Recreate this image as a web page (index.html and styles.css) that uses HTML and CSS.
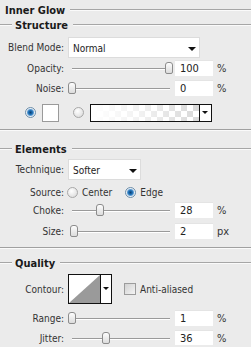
FILE: index.html
```html
<!DOCTYPE html>
<html lang="en">
<head>
  <meta charset="UTF-8">
  <title>Inner Glow</title>
  <link rel="stylesheet" href="styles.css">
</head>
<body>
  <div class="panel">
    <div class="title"><span>Inner Glow</span><i class="rule"></i></div>

    <div class="head m1"><i class="lead"></i><span>Structure</span><i class="rule"></i></div>

    <div class="row tall m5">
      <label>Blend Mode:</label>
      <div class="select wide">Normal<b class="arrow"></b></div>
    </div>

    <div class="row m3">
      <label>Opacity:</label>
      <div class="slider"><i class="track"></i><i class="thumb" style="left: 97px"></i></div>
      <div class="num">100</div><span class="unit">%</span>
    </div>

    <div class="row m6">
      <label>Noise:</label>
      <div class="slider"><i class="track"></i><i class="thumb" style="left: 0px"></i></div>
      <div class="num">0</div><span class="unit">%</span>
    </div>

    <div class="colors m9">
      <i class="radio on"></i>
      <i class="swatch"></i>
      <i class="radio"></i>
      <div class="gradient"><i class="checks"></i><b class="drop"><b class="arrow"></b></b></div>
    </div>

    <hr class="sep m8">

    <div class="head m11"><i class="lead"></i><span>Elements</span><i class="rule"></i></div>

    <div class="row tall m3">
      <label>Technique:</label>
      <div class="select short">Softer<b class="arrow"></b></div>
    </div>

    <div class="row m5">
      <label>Source:</label>
      <i class="radio src"></i><span class="opt">Center</span>
      <i class="radio on src2"></i><span class="opt">Edge</span>
    </div>

    <div class="row m4">
      <label>Choke:</label>
      <div class="slider"><i class="track"></i><i class="thumb" style="left: 28px"></i></div>
      <div class="num">28</div><span class="unit">%</span>
    </div>

    <div class="row m7">
      <label>Size:</label>
      <div class="slider"><i class="track"></i><i class="thumb" style="left: 2px"></i></div>
      <div class="num">2</div><span class="unit">px</span>
    </div>

    <hr class="sep m9">

    <div class="head m7"><i class="lead"></i><span>Quality</span><i class="rule"></i></div>

    <div class="row contour-row m4">
      <label>Contour:</label>
      <div class="contour">
        <svg width="31" height="28" viewBox="0 0 31 28"><rect width="31" height="28" fill="#fff"/><polygon points="0,28 31,0 31,28" fill="#9a9a9a"/></svg>
        <b class="drop"><b class="arrow"></b></b>
      </div>
      <i class="check"></i><span class="opt">Anti-aliased</span>
    </div>

    <div class="row m7">
      <label>Range:</label>
      <div class="slider"><i class="track"></i><i class="thumb" style="left: 0px"></i></div>
      <div class="num">1</div><span class="unit">%</span>
    </div>

    <div class="row m6">
      <label>Jitter:</label>
      <div class="slider"><i class="track"></i><i class="thumb" style="left: 34px"></i></div>
      <div class="num">36</div><span class="unit">%</span>
    </div>
  </div>
</body>
</html>
```

FILE: styles.css
```css
html, body {
  margin: 0;
  background-color: #ebebeb;
}
body {
  font-family: "DejaVu Sans Condensed", "DejaVu Sans", sans-serif;
  font-size: 10px;
  color: #222;
}
.panel {
  width: 251px;
  padding-top: 3px;
}
.m1 { margin-top: 1px; }
.m3 { margin-top: 3px; }
.m4 { margin-top: 4px; }
.m5 { margin-top: 5px; }
.m6 { margin-top: 6px; }
.m7 { margin-top: 7px; }
.m8 { margin-top: 8px; }
.m9 { margin-top: 9px; }
.m11 { margin-top: 11px; }

.title, .head {
  display: flex;
  align-items: center;
  height: 14px;
  font-weight: bold;
  font-size: 11px;
  color: #1a1a1a;
}
.title span {
  margin-left: 5px;
}
.head span {
  margin-left: 3px;
}
.rule, .lead {
  display: block;
  height: 1px;
  background-color: #a6a6a6;
  border-bottom: 1px solid #fafafa;
}
.rule {
  flex: 1;
  margin-left: 5px;
}
.lead {
  width: 12px;
}

.row {
  display: flex;
  align-items: center;
  height: 14px;
}
.row.tall {
  height: 21px;
}
.row label {
  width: 64px;
  text-align: right;
  flex: none;
  color: #333;
}

.select {
  position: relative;
  height: 19px;
  line-height: 21px;
  margin-left: 4px;
  padding-left: 4px;
  background-color: #fff;
  border: 1px solid #dcdcdc;
  box-sizing: content-box;
}
.select.wide { width: 126px; }
.select.short { width: 67px; }
.arrow {
  position: absolute;
  width: 0;
  height: 0;
  border-left: 4px solid transparent;
  border-right: 4px solid transparent;
  border-top: 4px solid #111;
}
.select .arrow {
  right: 3px;
  top: 9px;
}

.slider {
  position: relative;
  width: 107px;
  height: 14px;
  margin-left: 4px;
}
.track {
  position: absolute;
  left: 4px;
  right: 5px;
  top: 7px;
  height: 1px;
  background-color: #9a9a9a;
  border-bottom: 1px solid #fff;
}
.thumb {
  position: absolute;
  top: 1px;
  width: 6px;
  height: 10px;
  background: linear-gradient(#fdfdfd, #dcdcdc);
  border: 1px solid #8c8c8c;
  border-radius: 3px 3px 2px 2px;
}
.num {
  width: 33px;
  height: 15px;
  line-height: 16px;
  padding-left: 5px;
  background-color: #fff;
  border-top: 1px solid #e4e4e4;
  box-sizing: content-box;
  font-size: 11px;
}
.unit {
  margin-left: 4px;
  color: #333;
  font-size: 11px;
}

.colors {
  display: flex;
  align-items: center;
  height: 17px;
}
.radio {
  display: block;
  flex: none;
  width: 9px;
  height: 9px;
  border-radius: 50%;
  border: 1px solid #a8a8a8;
  background: radial-gradient(circle at 40% 35%, #fff, #d6d6d6);
}
.radio.on {
  border-color: #6d8eaa;
  background: radial-gradient(circle at 50% 50%, #0b3f73 0, #1e6fb5 2px, #5b9ad0 3px, #e8eef4 4px);
}
.colors .radio:first-child {
  margin-left: 25px;
}
.swatch {
  display: block;
  width: 15px;
  height: 16px;
  margin-left: 6px;
  background-color: #fff;
  border: 1px solid #9a9a9a;
}
.colors .radio:nth-child(3) {
  margin-left: 14px;
}
.gradient {
  display: flex;
  width: 120px;
  height: 16px;
  margin-left: 6px;
  border: 1px solid #111;
}
.checks {
  display: block;
  flex: 1;
  background:
    linear-gradient(to right, #fff 0%, rgba(255,255,255,0.7) 45%, rgba(255,255,255,0.1) 100%),
    conic-gradient(#d4d4d4 25%, #fff 0 50%, #d4d4d4 0 75%, #fff 0) 0 0 / 12px 12px;
}
.drop {
  position: relative;
  display: block;
  width: 11px;
  background-color: #fff;
  border-left: 1px solid #111;
}
.gradient .arrow {
  left: 2px;
  top: 6px;
  border-left-width: 3px;
  border-right-width: 3px;
  border-top-width: 3px;
}

.radio.src {
  margin-left: 3px;
}
.radio.src2 {
  margin-left: 13px;
}
.opt {
  margin-left: 4px;
  color: #333;
}

.sep {
  height: 1px;
  margin-bottom: 0;
  margin-left: 0;
  margin-right: 0;
  border: 0;
  background-color: #a0a0a0;
  border-bottom: 1px solid #fafafa;
}

.contour-row {
  height: 30px;
}
.contour {
  display: flex;
  height: 28px;
  margin-left: 4px;
  border: 1px solid #111;
}
.contour svg {
  display: block;
}
.contour .drop {
  width: 10px;
}
.contour .arrow {
  left: 2px;
  top: 12px;
  border-left-width: 3px;
  border-right-width: 3px;
  border-top-width: 3px;
}
.check {
  display: block;
  width: 10px;
  height: 10px;
  margin-left: 12px;
  border: 1px solid #9c9c9c;
  background: linear-gradient(135deg, #d2d2d2, #f4f4f4);
}
```
